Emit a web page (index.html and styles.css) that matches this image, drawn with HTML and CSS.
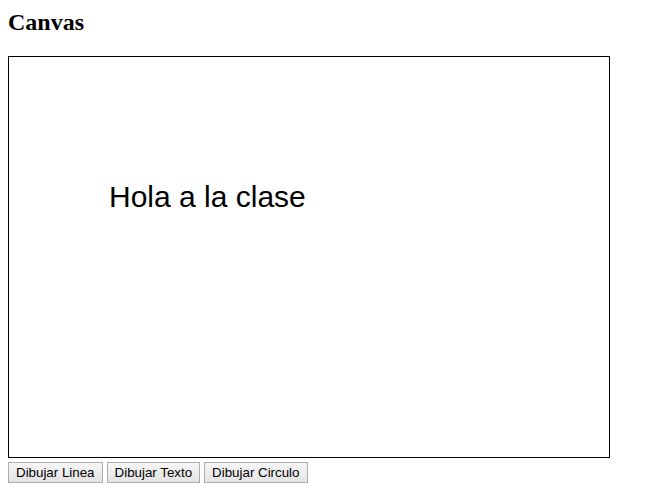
FILE: index.html
```html
<!DOCTYPE html>
<html>
<head>
<meta charset="utf-8">
<title>Canvas</title>
<link rel="stylesheet" href="styles.css">
</head>
<body>
<h2 class="title">Canvas</h2>
<div class="canvas">
  <span class="canvas-text">Hola a la clase</span>
</div>
<div class="controls">
  <button class="btn">Dibujar Linea</button>
  <button class="btn">Dibujar Texto</button>
  <button class="btn">Dibujar Circulo</button>
</div>
</body>
</html>
```

FILE: styles.css
```css
body {
  margin: 8px;
  font-family: "Liberation Serif", "Times New Roman", serif;
  background: #fff;
  color: #000;
}
.title {
  font-size: 24px;
  font-weight: bold;
  margin: 0 0 20px 0;
  line-height: 28px;
}
.canvas {
  position: relative;
  width: 600px;
  height: 400px;
  border: 1px solid #000;
  background: #fff;
}
.canvas-text {
  position: absolute;
  left: 100px;
  top: 123px;
  font-family: "Liberation Sans", Arial, sans-serif;
  font-size: 30px;
  line-height: 34px;
  color: #000;
  white-space: nowrap;
}
.controls {
  display: flex;
  gap: 4px;
  margin-top: 4px;
}
.btn {
  font-family: "Liberation Sans", Arial, sans-serif;
  font-size: 13.333px;
  color: #000;
  background: linear-gradient(#f6f6f6, #e3e3e3);
  border: 1px solid #adadad;
  border-radius: 0;
  padding: 1px 7px;
  height: 21px;
  margin: 0;
}
```
